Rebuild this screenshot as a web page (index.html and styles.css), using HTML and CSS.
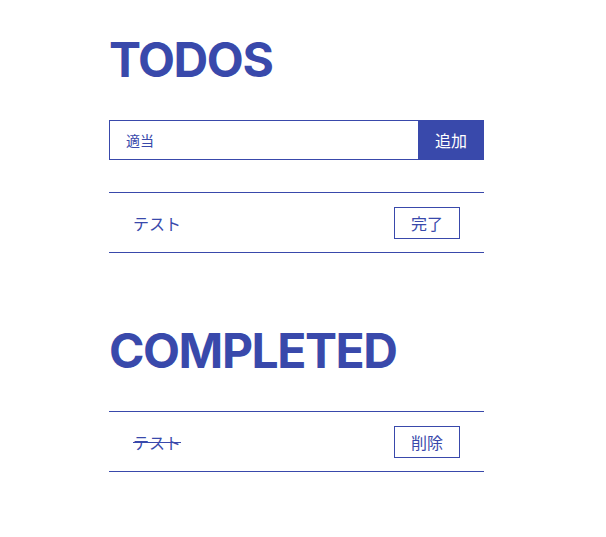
FILE: index.html
```html
<!DOCTYPE html>
<html lang="ja">
<head>
<meta charset="utf-8">
<title>TODOS</title>
<link rel="stylesheet" href="styles.css">
</head>
<body>
<main class="app">
  <section class="section">
    <h1 class="title">TODOS</h1>
    <form class="add-form">
      <input class="add-input" type="text" value="適当">
      <button class="add-button" type="button">追加</button>
    </form>
    <ul class="list list-todos">
      <li class="item">
        <span class="item-text">テスト</span>
        <button class="item-button" type="button">完了</button>
      </li>
    </ul>
  </section>
  <section class="section section-completed">
    <h1 class="title">COMPLETED</h1>
    <ul class="list">
      <li class="item">
        <span class="item-text done">テスト</span>
        <button class="item-button" type="button">削除</button>
      </li>
    </ul>
  </section>
</main>
</body>
</html>
```

FILE: styles.css
```css
* { box-sizing: border-box; }

body {
  margin: 0;
  background: #ffffff;
  color: #3949ab;
  font-family: "Inter", "Noto Sans CJK JP", sans-serif;
}

.app {
  width: 375px;
  margin-left: 109px;
  padding-top: 36px;
}

.title {
  margin: 0 0 36px;
  font-family: "Inter", sans-serif;
  font-weight: 700;
  font-size: 48px;
  line-height: 48px;
  letter-spacing: -0.03em;
  color: #3949ab;
}

.add-form {
  display: flex;
  height: 40px;
  margin: 0;
}

.add-input {
  flex: 1;
  min-width: 0;
  height: 40px;
  margin: 0;
  padding: 0 16px;
  border: 1px solid #3949ab;
  border-right: none;
  outline: none;
  font-family: "Inter", "Noto Sans CJK JP", sans-serif;
  font-size: 14px;
  color: #3949ab;
  background: #fff;
}

.add-button {
  width: 66px;
  height: 40px;
  margin: 0;
  padding: 0;
  border: none;
  background: #3949ab;
  color: #ffffff;
  font-family: "Inter", "Noto Sans CJK JP", sans-serif;
  font-size: 16px;
}

.list {
  list-style: none;
  margin: 0;
  padding: 0;
}

.list-todos {
  margin-top: 32px;
}

.item {
  display: flex;
  align-items: center;
  justify-content: space-between;
  padding: 14px 24px 13px;
  border-top: 1px solid #3949ab;
  border-bottom: 1px solid #3949ab;
}

.item-text {
  font-family: "Noto Sans CJK JP", sans-serif;
  font-size: 16px;
  color: #3949ab;
}

.done {
  text-decoration: line-through;
}

.item-button {
  width: 66px;
  height: 32px;
  margin: 0;
  padding: 0;
  border: 1px solid #3949ab;
  background: #ffffff;
  color: #3949ab;
  font-family: "Inter", "Noto Sans CJK JP", sans-serif;
  font-size: 16px;
}

.section-completed {
  margin-top: 74px;
}
```
